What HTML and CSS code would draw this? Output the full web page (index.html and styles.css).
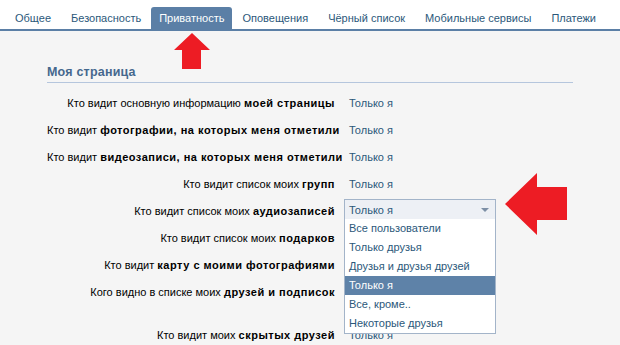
FILE: index.html
```html
<!DOCTYPE html>
<html lang="ru">
<head>
<meta charset="utf-8">
<link rel="stylesheet" href="styles.css">
</head>
<body>
<div class="tabs">
  <a class="tab">Общее</a>
  <a class="tab">Безопасность</a>
  <a class="tab active">Приватность</a>
  <a class="tab">Оповещения</a>
  <a class="tab">Чёрный список</a>
  <a class="tab">Мобильные сервисы</a>
  <a class="tab">Платежи</a>
</div>
<div class="content">
  <div class="heading">Моя страница</div>
  <div class="rows">
    <div class="row"><div class="label">Кто видит основную информацию <b>моей страницы</b></div><div class="value">Только я</div></div>
    <div class="row"><div class="label">Кто видит <b>фотографии, на которых меня отметили</b></div><div class="value">Только я</div></div>
    <div class="row"><div class="label">Кто видит <b>видеозаписи, на которых меня отметили</b></div><div class="value">Только я</div></div>
    <div class="row"><div class="label">Кто видит список моих <b>групп</b></div><div class="value">Только я</div></div>
    <div class="row"><div class="label">Кто видит список моих <b>аудиозаписей</b></div>
      <div class="value select-wrap">
        <div class="select-head"><span>Только я</span><span class="caret"></span></div>
        <ul class="options">
          <li>Все пользователи</li>
          <li>Только друзья</li>
          <li>Друзья и друзья друзей</li>
          <li class="selected">Только я</li>
          <li>Все, кроме..</li>
          <li>Некоторые друзья</li>
        </ul>
      </div>
    </div>
    <div class="row"><div class="label">Кто видит список моих <b>подарков</b></div><div class="value"></div></div>
    <div class="row"><div class="label">Кто видит <b>карту с моими фотографиями</b></div><div class="value"></div></div>
    <div class="row"><div class="label">Кого видно в списке моих <b>друзей и подписок</b></div><div class="value"></div></div>
    <div class="row tall"><div class="label">Кто видит моих <b>скрытых друзей</b></div><div class="value">Только я</div></div>
  </div>
</div>
<svg class="arrow-up" width="38" height="38" viewBox="0 0 38 38"><polygon points="19,0 37,17 28,17 28,36 9,36 9,17 1,17" fill="#ed1c24"/></svg>
<svg class="arrow-left" width="64" height="64" viewBox="0 0 64 64"><polygon points="0,31 32,0 32,14 62,14 62,47 32,47 32,62" fill="#ed1c24"/></svg>
</body>
</html>
```
FILE: styles.css
```css
html, body {
  margin: 0;
  padding: 0;
}
body {
  background: #f5f5f5;
  font-family: "Liberation Sans", Arial, sans-serif;
  font-size: 11px;
  color: #000;
  width: 620px;
  height: 345px;
  overflow: hidden;
  position: relative;
}
b {
  letter-spacing: 0.5px;
}
.tabs {
  background: #fff;
  height: 29px;
  border-bottom: 2px solid #5b7fa6;
  display: flex;
  align-items: flex-end;
  padding-left: 5px;
}
.tab {
  color: #2b587a;
  padding: 0 10px;
  height: 22px;
  line-height: 23px;
  white-space: nowrap;
}
.tab.active {
  background: #5b7fa6;
  color: #fff;
  border-radius: 3px 3px 0 0;
  padding: 0 8px;
}
.content {
  padding: 34px 0 0 47px;
  width: 526px;
}
.heading {
  color: #45688e;
  font-weight: bold;
  font-size: 12.5px;
  letter-spacing: 0.2px;
  padding-bottom: 3px;
  border-bottom: 1px solid #b5c6dd;
  line-height: 14px;
}
.rows {
  padding-top: 12px;
}
.row {
  display: grid;
  grid-template-columns: 288px 1fr;
  column-gap: 14px;
  height: 27px;
  line-height: 16px;
}
.row.tall {
  margin-top: 16px;
}
.label {
  text-align: right;
  white-space: nowrap;
}
.value {
  color: #2b587a;
}
.select-wrap {
  position: relative;
  margin-left: -5px;
  width: 152px;
  margin-top: -4px;
  z-index: 2;
}
.select-head {
  display: flex;
  justify-content: space-between;
  align-items: center;
  height: 19px;
  padding: 0 6px 0 4px;
  background: #edf0f5;
  border: 1px solid #a3b4c9;
  border-bottom: none;
}
.caret {
  width: 0;
  height: 0;
  border-left: 4px solid transparent;
  border-right: 4px solid transparent;
  border-top: 4px solid #7d8fa6;
}
.options {
  position: absolute;
  left: 0;
  top: 20px;
  width: 152px;
  box-sizing: border-box;
  margin: 0;
  padding: 0;
  list-style: none;
  background: #fff;
  border: 1px solid #a3b4c9;
  border-top: none;
}
.options li {
  height: 19px;
  line-height: 19px;
  padding-left: 4px;
  color: #2b587a;
  white-space: nowrap;
}
.options li.selected {
  background: #5e82a8;
  color: #fff;
}
.arrow-up {
  position: absolute;
  left: 173px;
  top: 33px;
}
.arrow-left {
  position: absolute;
  left: 505px;
  top: 173px;
}
```
